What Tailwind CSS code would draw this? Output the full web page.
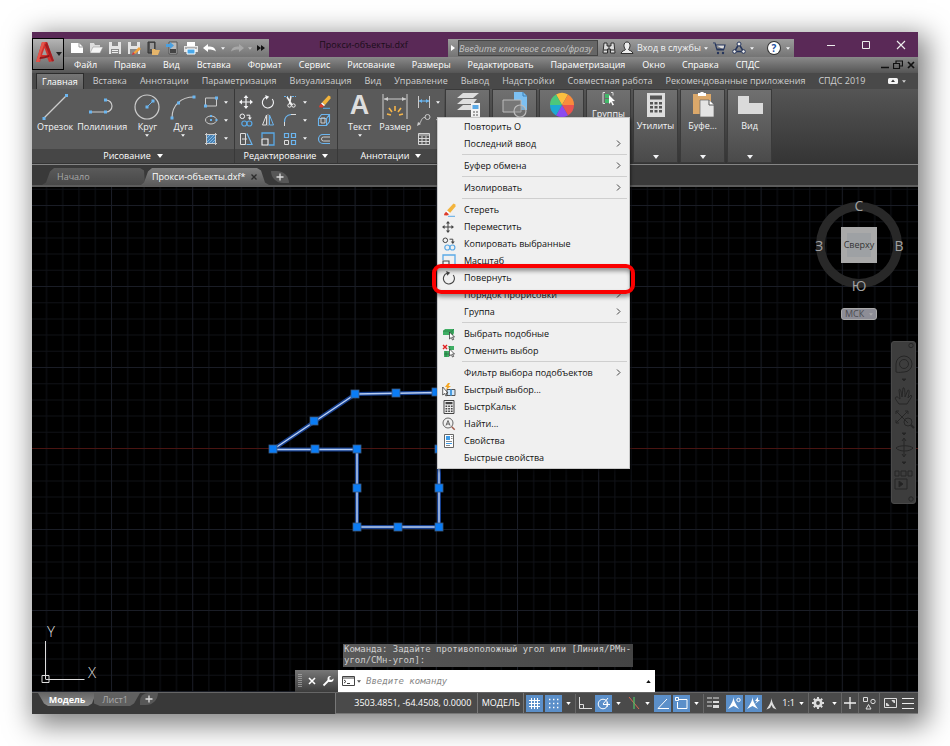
<!DOCTYPE html>
<html lang="ru">
<head>
    <meta charset="UTF-8">
    <meta name="viewport" content="width=device-width, initial-scale=1.0">
    <title>Прокси-объекты.dxf</title>
    <script src="https://cdn.jsdelivr.net/npm/@tailwindcss/browser@4"></script>
</head>
<body class="min-h-screen bg-white p-8 font-['Open_Sans','Noto_Sans',sans-serif] text-[9px] leading-3 text-gray-100">

    <!-- shared icons -->
    <svg class="hidden" xmlns="http://www.w3.org/2000/svg">
        <symbol id="i-move" viewBox="0 0 14 14">
            <path d="M7 1.5v11M1.5 7h11" fill="none" stroke="currentColor" stroke-width="1.2"/>
            <path d="M7 0l2.4 3H4.6zM7 14l2.4-3H4.6zM0 7l3-2.4v4.8zM14 7l-3-2.4v4.8z" fill="currentColor"/>
        </symbol>
        <symbol id="i-rotate" viewBox="0 0 14 14">
            <path d="M11.2 4A5.500 5.500 0 1 1 5 2.300" fill="none" stroke="currentColor" stroke-width="1.1"/>
            <path d="M4.200 0l4 1.800-3 2.900z" fill="currentColor"/>
        </symbol>
        <symbol id="i-copy" viewBox="0 0 14 14">
            <circle cx="3.3" cy="3.3" r="2.3" fill="none" stroke="currentColor"/>
            <path d="M7.5 2.2h3.3v3" fill="none" stroke="currentColor"/>
            <path d="M8.8 4.4h4l-2 2.6z" fill="currentColor"/>
            <circle cx="5.3" cy="10.5" r="2.5" fill="none" stroke="#5aa9e6" stroke-width="1.2"/>
            <circle cx="10.4" cy="10.5" r="2.5" fill="none" stroke="#5aa9e6" stroke-width="1.2"/>
        </symbol>
        <symbol id="i-scale" viewBox="0 0 14 14">
            <path d="M1 6V1h12v12H8" fill="none" stroke="#5aa9e6" stroke-width="1.3"/>
            <path d="M1 7h6v6H1z" fill="none" stroke="currentColor" stroke-width="1.1"/>
        </symbol>
        <symbol id="i-erase" viewBox="0 0 14 14">
            <path d="M11.5.5l2 1v2L8 10 5 7.500z" fill="#f3b43c"/>
            <path d="M5 7.500L8 10l-1 1.200-3-2.500z" fill="#fff"/>
            <path d="M4 8.700l3 2.500L5.200 12.500 2 12.200l.3-1.500z" fill="#dd3b2a"/>
            <path d="M6 13.300h7" stroke="#5aa9e6" stroke-width="1"/>
        </symbol>
        <symbol id="i-calc" viewBox="0 0 14 14">
            <path d="M2 .5h10v13H2z" fill="none" stroke="currentColor"/>
            <path d="M3.500 2h7v2.200h-7zM3.500 5.500h1.700v1.500H3.500zm2.700 0h1.700v1.500H6.200zm2.700 0h1.700v1.500H8.900zM3.500 8h1.700v1.500H3.500zm2.700 0h1.700v1.500H6.200zm2.700 0h1.700v1.500H8.900zM3.500 10.500h1.700V12H3.500zm2.700 0h1.700V12H6.200zm2.700 0h1.700V12H8.900z" fill="currentColor"/>
        </symbol>
        <symbol id="i-down" viewBox="0 0 6 4"><path d="M0 0h6L3 4z" fill="currentColor"/></symbol>
        <symbol id="i-right" viewBox="0 0 5 7"><path d="M1 .5l3 3-3 3" fill="none" stroke="currentColor"/></symbol>
    </svg>

    <div class="relative flex h-[calc(100vh-64px)] flex-col bg-[#3b3b3b] shadow-[5px_7px_26px_4px_rgba(0,0,0,0.5)]">

        <!-- application button -->
        <button aria-label="Меню приложения" class="absolute left-0 top-1.5 z-10 flex h-8 w-8 items-center border border-black bg-linear-to-b from-[#b4b4b4] to-[#6c6c6c] pl-0.5">
            <svg class="-mt-1 h-6 w-[21px] shrink-0" viewBox="0 0 21 24">
                <path d="M7 2h5l7 19-5 1-2-5-6 .5L5 22H1z" fill="#d2322d"/>
                <path d="M7 2h3L6 13l-1.500 9H1z" fill="#e4554b"/>
                <path d="M12 2l7 19-2 .5L10 5z" fill="#a31d20"/>
                <path d="M9.500 8L7 15h5z" fill="#a0a0a0"/>
                <path d="M5 17c4 0 7-1 9-2.500l.7 2C12 18 8 19 4.500 19z" fill="#8f181c"/>
            </svg>
            <svg class="h-1 w-1.5 text-[#222]"><use href="#i-down"/></svg>
        </button>

        <!-- title bar -->
        <header class="flex h-[25px] shrink-0 items-end bg-[#5a2957] pl-8">
            <div class="flex h-[18px] w-[205px] items-center gap-[5px] bg-linear-to-b from-[#9c9c9c] to-[#747474] pl-1.5">
                <button aria-label="Создать"><svg class="size-3.5" viewBox="0 0 14 14"><path d="M1 2h8l4 4v6H1z" fill="#fff"/><path d="M9 2v4h4" fill="none" stroke="#999"/></svg></button>
                <button aria-label="Открыть"><svg class="size-3.5" viewBox="0 0 14 14"><path d="M1 12V2h4l1 2h5v2" fill="#ddd"/><path d="M1 12l3-6h10l-3 6z" fill="#f5f5f5" stroke="#888" stroke-width=".5"/></svg></button>
                <button aria-label="Сохранить"><svg class="size-3.5" viewBox="0 0 14 14"><path d="M1 1h12v12H1z" fill="#e4e4e4"/><path d="M4 1h6v4H4zM3 8h8v5H3z" fill="#8a8a8a"/><path d="M4 9.500h6M4 11.500h6" stroke="#eee"/></svg></button>
                <button aria-label="Сохранить как"><svg class="size-3.5" viewBox="0 0 14 14"><path d="M1 1h12v12H1z" fill="#e4e4e4"/><path d="M4 1h6v4H4zM3 8h8v5H3z" fill="#8a8a8a"/><path d="M6 12l6-6 2 2-6 5z" fill="#f0a33c"/><path d="M6 11l2 2-3 1z" fill="#d33"/></svg></button>
                <button aria-label="Открыть с мобильного"><svg class="size-3.5" viewBox="0 0 14 14"><path d="M2 1h7v11H2z" fill="#555" stroke="#333"/><path d="M4 2h4v6H4z" fill="#999"/><path d="M6 8h3l1 1h4l-2 5H6z" fill="#e5b56b"/></svg></button>
                <button aria-label="Сохранить на мобильный"><svg class="size-3.5" viewBox="0 0 14 14"><path d="M4 1h8v12H4z" fill="#bbb" stroke="#555"/><path d="M5 8h6v4H5z" fill="#444"/><path d="M1 3h4V1l4 3.500L5 8V6H1z" fill="#4aa0e0"/></svg></button>
                <button aria-label="Печать"><svg class="size-3.5" viewBox="0 0 14 14"><path d="M3 1h8v4H3z" fill="#fff"/><path d="M0 5h14v6H0z" fill="#e6e6e6"/><path d="M1 7h12" stroke="#777"/><path d="M3 8h8v5H3z" fill="#4aa9ea" stroke="#fff"/></svg></button>
                <button aria-label="Отменить" class="flex items-center gap-1"><svg class="h-3 w-3.5" viewBox="0 0 14 12"><path d="M0 6l5-4v2.500c5 0 7 1 8 5C11 8 9 7.500 5 7.500V10z" fill="#fff"/></svg><svg class="h-[3px] w-1"><use href="#i-down"/></svg></button>
                <button aria-label="Повторить" class="flex items-center gap-1 text-[#bbb]"><svg class="h-3 w-3.5" viewBox="0 0 14 12"><path d="M14 6L9 2v2.500c-5 0-7 1-8 5C3 8 5 7.500 9 7.500V10z" fill="#a8a8a8"/></svg><svg class="h-[3px] w-1"><use href="#i-down"/></svg></button>
                <button aria-label="Ещё"><svg class="h-1.5 w-2" viewBox="0 0 8 6"><path d="M0 0l4 3-4 3zM4 0l4 3-4 3z" fill="#111"/></svg></button>
            </div>
            <h1 class="w-[179px] pb-1.5 pl-2.5 text-center text-[#1a0d19]">Прокси-объекты.dxf</h1>
            <div class="flex h-[18px] items-center bg-linear-to-b from-[#9c9c9c] to-[#747474]">
                <button aria-label="Свернуть поиск" class="flex w-2.5 justify-center"><svg class="h-1.5 w-1" viewBox="0 0 4 6"><path d="M0 0l4 3-4 3z" fill="#fff"/></svg></button>
                <input type="text" aria-label="Поиск" placeholder="Введите ключевое слово/фразу" class="h-4 w-[140px] border border-[#444] bg-[#666] p-0 italic placeholder:text-[#c4c4c4]">
                <button aria-label="Найти" class="ml-1"><svg class="size-3.5" viewBox="0 0 14 14"><path d="M2 2h3v3h4V2h3l1 10H8.500V8h-3v4H1z" fill="#ddd" stroke="#222" stroke-width=".9"/><path d="M2 9h3M9 9h3M7 5v3" stroke="#222"/></svg></button>
                <button class="ml-1 flex items-center gap-[3px]"><svg class="size-3.5" viewBox="0 0 14 14"><path d="M7 1c2 0 3 1.500 3 3.500S9 8 8.500 8.500c0 1 4 1 4.500 4H1c.5-3 4.500-3 4.500-4C5 8 4 6.500 4 4.500S5 1 7 1z" fill="#eee" stroke="#222" stroke-width=".9"/></svg>Вход в службы<svg class="h-[3px] w-1"><use href="#i-down"/></svg></button>
                <button aria-label="Магазин" class="ml-1"><svg class="size-3.5" viewBox="0 0 14 14"><path d="M1 2h2l2 7h7M3.500 4H13l-1 4H4.800" fill="#ddd" stroke="#25355c" stroke-width="1.200"/><circle cx="6" cy="12" r="1.200" fill="#25355c"/><circle cx="11" cy="12" r="1.200" fill="#25355c"/></svg></button>
                <button aria-label="Связь" class="ml-1.5 flex items-center gap-1"><svg class="size-3.5" viewBox="0 0 14 14"><path d="M7 3L2.500 10.500h9z" fill="none" stroke="#25355c" stroke-width="1.500"/><circle cx="7" cy="3" r="2" fill="#eee" stroke="#25355c"/><circle cx="2.500" cy="10.500" r="1.800" fill="#eee" stroke="#25355c"/><circle cx="11.500" cy="10.500" r="1.800" fill="#eee" stroke="#25355c"/></svg><svg class="h-[3px] w-1"><use href="#i-down"/></svg></button>
                <button aria-label="Справка" class="ml-3.5 mr-1 flex items-center gap-1.5"><span class="flex size-3 items-center justify-center rounded-full bg-white text-[10px] font-bold text-[#1d4fa0] ring-1 ring-[#333]">?</span><svg class="h-[3px] w-1"><use href="#i-down"/></svg></button>
            </div>
            <div class="ml-auto flex items-center gap-[25px] self-center pr-3">
                <button aria-label="Свернуть"><svg class="size-2.5" viewBox="0 0 10 10"><path d="M1 5.500h8" stroke="#eee"/></svg></button>
                <button aria-label="Развернуть"><svg class="size-2.5" viewBox="0 0 10 10"><path d="M1.500 1.500h7v7h-7z" fill="none" stroke="#eee"/></svg></button>
                <button aria-label="Закрыть"><svg class="size-2.5" viewBox="0 0 10 10"><path d="M1 1l8 8M9 1L1 9" stroke="#eee" stroke-width="1.100"/></svg></button>
            </div>
        </header>

        <!-- menu bar -->
        <nav class="flex h-4 shrink-0 items-center gap-[17px] whitespace-nowrap bg-linear-to-b from-[#8a8a8a] to-[#555] pl-[42px] text-white">
            <button>Файл</button><button>Правка</button><button>Вид</button><button>Вставка</button><button>Формат</button><button>Сервис</button><button>Рисование</button><button>Размеры</button><button>Редактировать</button><button>Параметризация</button><button>Окно</button><button>Справка</button><button>СПДС</button>
            <div class="ml-auto flex items-center gap-1 pr-[3px] text-[#111]">
                <button aria-label="Свернуть документ"><svg class="h-2.5 w-2" viewBox="0 0 8 10"><path d="M0 7.500h8" stroke="currentColor" stroke-width="1.500"/></svg></button>
                <button aria-label="Восстановить документ"><svg class="size-2.5" viewBox="0 0 10 10"><path d="M3 3V1h6.500v5H7M.5 3.500h6v5h-6z" fill="none" stroke="currentColor" stroke-width="1.200"/></svg></button>
                <button aria-label="Закрыть документ"><svg class="size-2" viewBox="0 0 8 8"><path d="M1 1l6 6M7 1L1 7" stroke="currentColor" stroke-width="1.700"/></svg></button>
            </div>
        </nav>

        <!-- ribbon tabs -->
        <nav class="flex h-4 shrink-0 items-center gap-[13px] whitespace-nowrap bg-[#494949] pl-1 text-[#cfcfcf]">
            <button class="-mr-1 h-full border border-b-0 border-[#2c2c2c] bg-linear-to-b from-[#757575] to-[#606060] px-[5px] text-white">Главная</button><button>Вставка</button><button>Аннотации</button><button>Параметризация</button><button>Визуализация</button><button>Вид</button><button>Управление</button><button>Вывод</button><button>Надстройки</button><button>Совместная работа</button><button>Рекомендованные приложения</button><button>СПДС 2019</button>
            <button aria-label="Свернуть ленту" class="ml-auto mr-3 flex items-center gap-1"><svg class="h-1.5 w-2.5" viewBox="0 0 10 6"><rect width="10" height="6" rx="1.500" fill="#f4f4f4"/><path d="M3 4h4L5 1.500z" fill="#333"/></svg><svg class="h-[3px] w-1"><use href="#i-down"/></svg></button>
        </nav>

        <!-- ribbon -->
        <div class="flex h-[76px] shrink-0 border-b border-[#858585] bg-linear-to-b from-[#555] to-[#343434] pb-px">
            <section class="flex w-[203px] flex-col border-r border-[#383838] bg-[#5a5a5a]">
                <div class="flex flex-1 gap-1 pl-[5px] pt-1">
                    <button class="flex flex-col items-center self-start"><svg class="size-7" viewBox="0 0 28 28"><path d="M3 25L25 3" stroke="#ccc" stroke-width="1.200"/><path d="M1.500 24h3v3h-3zM24 1h3v3h-3z" fill="#6bb5ef"/></svg>Отрезок</button>
                    <button class="flex flex-col items-center self-start"><svg class="size-7" viewBox="0 0 28 28"><path d="M2 19h16a6 6 0 0 0 0-12" fill="none" stroke="#ccc" stroke-width="1.200"/><path d="M1 17.500h3v3H1zM16 17.500h3v3h-3zM16 5.500h3v3h-3z" fill="#6bb5ef"/></svg>Полилиния</button>
                    <button class="ml-0.5 flex flex-col items-center self-start"><svg class="size-7" viewBox="0 0 28 28"><circle cx="14" cy="14" r="12" fill="none" stroke="#ccc" stroke-width="1.200"/><path d="M14 14l6-6" stroke="#6bb5ef"/><path d="M12.500 12.500h3v3h-3zM18.500 6.500h3v3h-3z" fill="#6bb5ef"/></svg>Круг<svg class="mt-px h-[3px] w-1"><use href="#i-down"/></svg></button>
                    <button class="ml-1 flex flex-col items-center self-start"><svg class="size-7" viewBox="0 0 28 28"><path d="M3 25C3 12 12 4 25 4" fill="none" stroke="#ccc" stroke-width="1.200"/><path d="M1.500 23.500h3v3h-3zM8 8.500h3v3H8zM23.500 2.500h3v3h-3z" fill="#6bb5ef"/></svg>Дуга<svg class="mt-px h-[3px] w-1"><use href="#i-down"/></svg></button>
                    <div class="ml-[3px] grid h-[55px] grid-cols-[14px_4px] items-center gap-x-1.5">
                        <svg class="size-3.5" viewBox="0 0 14 14"><path d="M1.500 3h11v8h-11z" fill="none" stroke="#ccc"/><path d="M0 9.500h3v3H0zM11 1.500h3v3h-3z" fill="#6bb5ef"/></svg><svg class="h-[3px] w-1"><use href="#i-down"/></svg>
                        <svg class="size-3.5" viewBox="0 0 14 14"><ellipse cx="7" cy="7" rx="5.500" ry="4" fill="none" stroke="#ccc"/><path d="M6 6h2v2H6zM11.500 6h2v2h-2zM6 2h2v2H6z" fill="#6bb5ef"/></svg><svg class="h-[3px] w-1"><use href="#i-down"/></svg>
                        <svg class="size-3.5" viewBox="0 0 14 14"><path d="M3 3h8v8H3z" fill="#4a80b0"/><path d="M2.500 1v12M11.500 1v12M1 2.500h12M1 11.500h12" stroke="#ccc"/><path d="M3 6l3-3M3 10l7-7M5 11l6-6M8 11l3-3" stroke="#8cc8f5" stroke-width=".8"/></svg><svg class="h-[3px] w-1"><use href="#i-down"/></svg>
                    </div>
                </div>
                <button class="flex h-3.5 items-center justify-center gap-1.5 bg-[#464646] text-white">Рисование<svg class="h-1 w-1.5"><use href="#i-down"/></svg></button>
            </section>

            <section class="flex w-[103px] flex-col border-r border-[#383838] bg-[#5a5a5a]">
                <div class="flex flex-1 pl-1 pt-1">
                    <div class="grid h-[55px] grid-cols-[14px_14px_14px_4px_14px] items-center gap-x-2">
                        <svg class="size-3.5"><use href="#i-move"/></svg>
                        <svg class="size-3.5"><use href="#i-rotate"/></svg>
                        <svg class="size-3.5" viewBox="0 0 14 14"><path d="M1 1.500h4M9 1.500h4" stroke="#6bb5ef" stroke-dasharray="2 1"/><path d="M4 2l5 8M8 1L6.500 9" stroke="#f2f2f2" stroke-width="1.500"/><circle cx="6.500" cy="10.500" r="1.700" fill="none" stroke="#f2f2f2"/><circle cx="10.500" cy="10.500" r="1.700" fill="none" stroke="#f2f2f2"/></svg>
                        <svg class="-ml-0.5 h-[3px] w-1"><use href="#i-down"/></svg>
                        <svg class="size-3.5"><use href="#i-erase"/></svg>

                        <svg class="size-3.5"><use href="#i-copy"/></svg>
                        <svg class="size-3.5" viewBox="0 0 14 14"><path d="M5.500 2v10h-4z" fill="none" stroke="#ddd"/><path d="M8.500 2v10h4z" fill="none" stroke="#6bb5ef"/><path d="M7 1v12" stroke="#ccc" stroke-width=".6"/></svg>
                        <svg class="size-3.5" viewBox="0 0 14 14"><path d="M1.500 13V9M8 1.500h5" stroke="#ddd"/><path d="M1.500 9c0-4 2-7 6.500-7.500" fill="none" stroke="#6bb5ef" stroke-width="1.200"/></svg>
                        <svg class="-ml-0.5 h-[3px] w-1"><use href="#i-down"/></svg>
                        <svg class="size-3.5" viewBox="0 0 14 14"><path d="M1.500 5.500h8v7h-8zM1.500 5.500l3-4h8v7l-3 4M9.500 5.500l3-4" fill="none" stroke="#6bb5ef" stroke-width="1.100"/><path d="M4 5h4v5H4z" fill="none" stroke="#ccc"/></svg>

                        <svg class="size-3.5" viewBox="0 0 14 14"><path d="M1.500 1.500h5v11h-5zM3 7h5" fill="none" stroke="#ddd"/><path d="M8 1.500l5 11H7.500" fill="none" stroke="#6bb5ef" stroke-width="1.200"/></svg>
                        <svg class="size-3.5"><use href="#i-scale"/></svg>
                        <svg class="size-3.5" viewBox="0 0 14 14"><path d="M8.500 1.500h4v4h-4zM8.500 8.500h4v4h-4zM1.500 1.500h4v4h-4z" fill="none" stroke="#6bb5ef" stroke-width="1.200"/><path d="M1.500 8.500h4v4h-4z" fill="none" stroke="#ddd"/></svg>
                        <svg class="-ml-0.5 h-[3px] w-1"><use href="#i-down"/></svg>
                        <svg class="size-3.5" viewBox="0 0 14 14"><path d="M13 2.500H6a4.500 4.500 0 0 0 0 9h7" fill="none" stroke="#6bb5ef" stroke-width="1.200"/><path d="M13 5H6.500a2 2 0 0 0 0 4H13" fill="none" stroke="#ccc"/></svg>
                    </div>
                </div>
                <button class="flex h-3.5 items-center justify-center gap-1.5 bg-[#464646] text-white">Редактирование<svg class="h-1 w-1.5"><use href="#i-down"/></svg></button>
            </section>

            <section class="mr-px flex w-[106px] flex-col bg-[#5a5a5a]">
                <div class="flex flex-1 gap-2 pl-2.5 pt-1">
                    <button class="flex flex-col items-center self-start"><span class="h-7 font-['Liberation_Sans',sans-serif] text-[27px] font-bold leading-6 text-[#dedede]">A</span>Текст<svg class="mt-px h-[3px] w-1"><use href="#i-down"/></svg></button>
                    <button class="flex flex-col items-center self-start"><svg class="size-7" viewBox="0 0 28 28"><path d="M2 1v25M26 1v25M3 6h22" stroke="#ccc"/><path d="M3 6l4-2v4zM25 6l-4-2v4z" fill="#ccc"/><path d="M14 13v5M8 15l3 4M20 15l-3 4M6 21l4 1M22 21l-4 1" stroke="#f5b54a" stroke-width="1.600"/></svg>Размер</button>
                    <div class="-ml-0.5 grid h-[55px] grid-cols-[14px_4px] items-center gap-x-[5px]">
                        <svg class="size-3.5" viewBox="0 0 14 14"><path d="M1.500 1v12M12.500 1v12" stroke="#ccc"/><path d="M2 6h10" stroke="#6bb5ef" stroke-width="1.200"/><path d="M2 6l3-2v4zM12 6L9 4v4z" fill="#6bb5ef"/></svg><svg class="h-[3px] w-1"><use href="#i-down"/></svg>
                        <svg class="size-3.5" viewBox="0 0 14 14"><circle cx="10.500" cy="4" r="2.500" fill="none" stroke="#ccc"/><path d="M8 4.500C4 4.500 5 8 2 11" fill="none" stroke="#ccc"/><path d="M0 13l1-4 3 2z" fill="#ccc"/></svg><svg class="h-[3px] w-1"><use href="#i-down"/></svg>
                        <svg class="size-3.5" viewBox="0 0 14 14"><path d="M1.500 1.500h11v11h-11zM1.500 3h11M1.500 6.500h11M1.500 9.500h11M5 4v8.500M9 4v8.500" fill="none" stroke="#d6d6d6"/></svg>
                    </div>
                </div>
                <button class="flex h-3.5 items-center justify-center gap-1.5 bg-[#464646] text-white">Аннотации<svg class="h-1 w-1.5"><use href="#i-down"/></svg></button>
            </section>

            <!-- collapsed panels -->
            <div class="flex gap-0.5">
                <button aria-label="Слои" class="flex w-[45px] flex-col items-center border border-[#3a3a3a] bg-linear-to-b from-[#707070] to-[#4a4a4a] pt-px">
                    <svg class="size-7" viewBox="0 0 28 28"><path d="M9 2h16l-6 5H3zM9 8h14l-4 5H3zM9 14h10v5H3z" fill="#dedede"/><path d="M17 12h9v14h-9z" fill="#f2f2f2"/><path d="M18.500 14h6v4h-6z" fill="#5aa9e6"/><path d="M19 21h5M19 24h5" stroke="#555" stroke-dasharray="2 1"/></svg>
                </button>
                <button aria-label="Блок" class="flex w-[45px] flex-col items-center border border-[#3a3a3a] bg-linear-to-b from-[#707070] to-[#4a4a4a] pt-px">
                    <svg class="size-7" viewBox="0 0 28 28"><path d="M13 1h9l4 4v14H13z" fill="#7cc0f2"/><path d="M22 1v4h4" fill="none" stroke="#3a80b8"/><path d="M2 9h18v12H2z" fill="#777" stroke="#bbb"/><circle cx="19" cy="20" r="6" fill="#8885" stroke="#bbb" stroke-width="1.200"/></svg>
                </button>
                <button aria-label="Свойства" class="flex w-[45px] flex-col items-center border border-[#3a3a3a] bg-linear-to-b from-[#707070] to-[#4a4a4a] pt-px">
                    <svg class="size-7" viewBox="0 0 28 28"><path d="M14 14L8 3.600a12 12 0 0 1 12 0z" fill="#fbbf3f"/><path d="M14 14l6-10.400A12 12 0 0 1 26 14z" fill="#f98b3c"/><path d="M14 14h12a12 12 0 0 1-6 10.400z" fill="#ea5350"/><path d="M14 14l6 10.400a12 12 0 0 1-12 0z" fill="#8b4bf0"/><path d="M14 14L8 24.400A12 12 0 0 1 2 14z" fill="#1da9d3"/><path d="M14 14H2A12 12 0 0 1 8 3.600z" fill="#4cc77c"/></svg>
                </button>
                <button class="flex w-[45px] flex-col items-center border border-[#3a3a3a] bg-linear-to-b from-[#707070] to-[#4a4a4a] pt-px">
                    <svg class="size-4" viewBox="0 0 16 16"><path d="M4 1.500H2v11h2M10 1.500h2v3" fill="none" stroke="#ddd"/><path d="M4 3h4v4H4zM4 8h4v4H4z" fill="#43b86a"/><path d="M8 4l6 6-3 .3 2 3.500-1.500.7-1.500-3.500L8 13z" fill="#fff"/></svg><span class="pt-px">Группы</span>
                </button>
                <button class="flex w-[45px] flex-col items-center border border-[#3a3a3a] bg-linear-to-b from-[#707070] to-[#4a4a4a] pb-[3px] pt-px">
                    <svg class="size-7" viewBox="0 0 28 28"><path d="M5 2h18v24H5z" fill="#dedede"/><path d="M8 4.500h12v4H8zM8 11h3v2.500H8zm4.500 0h3v2.500h-3zm4.500 0h3v2.500h-3zM8 15h3v2.500H8zm4.500 0h3v2.500h-3zm4.500 0h3v2.500h-3zM8 19h3v2.500H8zm4.500 0h3v2.500h-3zm4.500 0h3v2.500h-3z" fill="#555"/></svg><span class="pt-px">Утилиты</span><svg class="mt-auto h-1 w-1.5"><use href="#i-down"/></svg>
                </button>
                <button class="flex w-[45px] flex-col items-center border border-[#3a3a3a] bg-linear-to-b from-[#707070] to-[#4a4a4a] pb-[3px] pt-px">
                    <svg class="size-7" viewBox="0 0 28 28"><path d="M4 3h18v20H4z" fill="#dba86a"/><path d="M9 2h2c0-1.500 4-1.500 4 0h2v3H9z" fill="#fff"/><path d="M11 9h9l5 5v12H11z" fill="#e4e4e4" stroke="#666" stroke-width=".7"/><path d="M20 9v5h5" fill="#fff" stroke="#555"/></svg><span class="pt-px">Буфе...</span><svg class="mt-auto h-1 w-1.5"><use href="#i-down"/></svg>
                </button>
                <button class="flex w-[45px] flex-col items-center border border-[#3a3a3a] bg-linear-to-b from-[#707070] to-[#4a4a4a] pb-[3px] pt-px">
                    <svg class="size-7" viewBox="0 0 28 28"><path d="M2 5h11v7h14v11H2z" fill="#dadada"/></svg><span class="pt-px">Вид</span><svg class="mt-auto h-1 w-1.5"><use href="#i-down"/></svg>
                </button>
            </div>
        </div>

        <!-- document tabs -->
        <div class="flex h-[22px] shrink-0 items-end border-b-2 border-[#5c5c5c] bg-[#393939] pl-2.5">
            <button class="flex h-[17px] w-[103px] items-center bg-linear-to-b from-[#5a5a5a] to-[#484848] pl-[15px] text-[#a8a8a8] [clip-path:polygon(0_100%,4px_85%,8px_20%,12px_0,98px_0,102px_15%,100%_100%)]">Начало</button>
            <button class="-ml-1 flex h-[17px] w-[128px] items-center justify-between bg-linear-to-b from-[#808080] to-[#5c5c5c] pl-[11px] pr-3 text-white [clip-path:polygon(0_100%,3px_85%,7px_20%,11px_0,116px_0,120px_15%,124px_85%,100%_100%)]">Прокси-объекты.dxf*<svg class="size-1.5" viewBox="0 0 6 6"><path d="M.5.5l5 5M5.500.5l-5 5" stroke="#2c2c2c" stroke-width="1.300"/></svg></button>
            <button aria-label="Новый чертёж" class="mb-0.5 ml-0.5 flex h-3 w-[18px] items-center justify-center rounded-bl-xl rounded-tr-xl bg-[#575757]"><svg class="size-2" viewBox="0 0 8 8"><path d="M4 .5v7M.5 4h7" stroke="#ddd" stroke-width="1.300"/></svg></button>
        </div>

        <!-- drawing area -->
        <main class="relative flex-1 overflow-hidden bg-black">
            <svg class="absolute inset-0 size-full" xmlns="http://www.w3.org/2000/svg">
                <defs>
                    <pattern id="grid" x="79" y="18" width="81.200" height="81" patternUnits="userSpaceOnUse">
                        <path d="M16.700 0v81M33 0v81M49.200 0v81M65.500 0v81M0 16.700h82M0 33h82M0 49h82M0 65.200h82" stroke="#0f1116"/>
                        <path d="M.5 0v81M0 .5h82" stroke="#1a1d26"/>
                    </pattern>
                </defs>
                <rect width="100%" height="100%" fill="url(#grid)"/>
                <path d="M0 261.500h2000" stroke="#4a1512"/>
                <g fill="none" stroke-linejoin="round">
                    <path d="M241 262.500L323.500 207 407 205.500V340H325V262.500z" stroke="#163f8e" stroke-width="4"/>
                    <path d="M241 262.500L323.500 207 407 205.500V340H325V262.500z" stroke="#b9cff2" stroke-width="1.500"/>
                </g>
                <g id="grips" fill="#0a7cf5" stroke="#3c5a80" stroke-width=".8"></g>
            </svg>

            <svg class="absolute bottom-2 left-2 h-16 w-[70px]" viewBox="0 -6 70 64">
                <path d="M5.500 15v38M5.500 53.500h39M2 49.500h7v7H2z" fill="none" stroke="#ddd"/>
                <text x="7" y="11" font-size="15" font-weight="300" fill="#ddd">Y</text>
                <text x="48" y="52" font-size="15" font-weight="300" fill="#ddd">X</text>
            </svg>

            <!-- view cube -->
            <div class="absolute right-3 top-2 w-[94px]">
                <svg class="h-[102px] w-[94px]" viewBox="0 0 94 102">
                    <circle cx="47" cy="50" r="38.500" fill="none" stroke="#282828" stroke-width="9"/>
                    <path d="M29 32h36v36H29z" fill="#a9a9a9"/>
                    <path d="M35 38h24v24H35z" fill="#9ea1a4"/>
                    <g fill="#a2a2a2" font-size="14" text-anchor="middle">
                        <text x="47" y="16">С</text><text x="47" y="96">Ю</text><text x="7" y="56">З</text><text x="87" y="56">В</text>
                    </g>
                    <text x="47" y="53" font-size="9" text-anchor="middle" fill="#333">Сверху</text>
                </svg>
                <button class="mx-auto mt-[11px] flex h-3 w-9 items-center justify-between rounded-[3px] border border-[#aaa] bg-[#8d8d96] px-[3px] text-[#4c4c50]">МСК<svg class="h-[3px] w-1 text-[#aaa]"><use href="#i-down"/></svg></button>
            </div>

            <!-- navigation bar -->
            <div class="absolute right-0.5 top-[154px] rounded-[3px] border border-[#4a4a4a] bg-[#3d3d3d]">
                <svg class="h-[161px] w-[23px]" viewBox="0 0 23 161" fill="none" stroke="#262626">
                    <circle cx="19" cy="3.500" r="2.200"/><circle cx="19" cy="157" r="2.200"/>
                    <path d="M4 22a8 8 0 1 1 8 8c-3 0-4 1-8 0z"/><circle cx="12" cy="22" r="4.500"/>
                    <path d="M7 62c-2-3-5-6-3-7s3 2 4 2l-1-9c1-2 2 0 3 7l1-9c1-1 2 0 2 9l3-7c2 0 1 3 0 8l3-3c2 1-1 4-4 9z"/>
                    <path d="M4 69l12 12M16 69L4 81M4 72v-3h3M13 69h3v3M4 78v3h3"/><circle cx="16" cy="80" r="4"/><path d="M19 83l3 3" stroke-width="2"/>
                    <path d="M12 97v17M4 106c3 4 14 4 17 0M4 106c3-3 14-3 17 0M10 99l2-3 2 3M10 112l2 3 2-3"/>
                    <path d="M3 129h4v5H3zM9 129h5v5H9zM16 129h4v5h-4zM3 137h12v10H3z"/>
                    <path d="M7 139v6l4-3zM10 37h4l-2 2zM10 91h4l-2 2zM10 120h4l-2 2z" fill="#222"/>
                </svg>
            </div>

            <!-- command line -->
            <div class="absolute bottom-0 left-1/2 w-[360px] -translate-x-1/2 font-['DejaVu_Sans_Mono',monospace]">
                <p class="mb-[3px] ml-12 mr-[22px] whitespace-nowrap bg-linear-to-r from-[#5a5a5a] to-[#444] px-px pb-px text-[9px] leading-[11px] text-[#d0d0d0]">Команда: Задайте противоположный угол или [Линия/РМн-<br>угол/СМн-угол]:</p>
                <div class="flex h-[22px]">
                    <div class="flex w-[43px] items-center gap-1.5 bg-linear-to-b from-[#777] to-[#3c3c3c] pl-[3px]">
                        <svg class="h-3.5 w-1" viewBox="0 0 4 14"><path d="M1 0v14M3 0v14" stroke="#ccc" stroke-dasharray="1 1"/></svg>
                        <button aria-label="Закрыть"><svg class="size-2" viewBox="0 0 8 8"><path d="M1 1l6 6M7 1L1 7" stroke="#fff" stroke-width="1.600"/></svg></button>
                        <button aria-label="Настройка"><svg class="size-3" viewBox="0 0 12 12"><path d="M1.500 10.500L7 5" stroke="#fff" stroke-width="1.800"/><path d="M9 1a3 3 0 1 0 2.500 2.500L9.500 5 7.500 4.500 7.500 2.500z" fill="#fff"/></svg></button>
                    </div>
                    <label for="command" class="flex items-center gap-0.5 bg-white pl-1 text-[#555]" aria-label="Команда"><svg class="h-2.5 w-[13px]" viewBox="0 0 13 10"><path d="M.5.5h12v9H.5zM.5 2h12" fill="none" stroke="#444"/><path d="M2 4l2 1.500L2 7M5 7.500h3" fill="none" stroke="#444"/></svg><svg class="h-[3px] w-1"><use href="#i-down"/></svg></label>
                    <input id="command" type="text" placeholder="Введите команду" class="min-w-0 flex-1 bg-white pl-[5px] text-[9px] italic text-gray-800 outline-none placeholder:text-[#888]">
                    <button aria-label="История" class="bg-white pr-1"><svg class="h-[3px] w-[5px]" viewBox="0 0 6 4"><path d="M0 4h6L3 0z" fill="#111"/></svg></button>
                </div>
            </div>
        </main>

        <!-- status bar -->
        <footer class="flex h-[22px] shrink-0 justify-between border-t border-[#666] bg-[#393939]">
            <div class="flex items-start pl-1.5">
                <button class="h-[13px] w-[58px] bg-linear-to-b from-[#666] to-[#8c8c8c] font-bold text-white [clip-path:polygon(0_0,100%_0,54px_80%,50px_100%,10px_100%,6px_80%)]">Модель</button>
                <button class="-ml-1.5 h-[13px] w-[50px] bg-[#606060] text-[#aaa] [clip-path:polygon(4px_0,100%_0,44px_80%,40px_100%,10px_100%,4px_80%)]">Лист1</button>
                <button aria-label="Новый лист" class="flex h-3 w-[18px] items-center justify-center rounded-br-xl rounded-tl-lg bg-[#575757]"><svg class="size-2" viewBox="0 0 8 8"><path d="M4 .5v7M.5 4h7" stroke="#ddd" stroke-width="1.300"/></svg></button>
            </div>
            <div class="flex items-center whitespace-nowrap border-b border-[#777] bg-[#4a4a4a] text-white">
                <button class="h-full w-[142px] border-l border-[#777] pr-1.5 text-right">3503.4851, -64.4508, 0.0000</button>
                <button class="h-full w-[47px] border-x border-[#777] text-center">МОДЕЛЬ</button>
                <button aria-label="Сетка" class="ml-0.5 bg-[#5b8fc9] p-0.5"><svg class="size-[13px]" viewBox="0 0 13 13"><path d="M3.500 1v11M6.500 1v11M9.500 1v11M1 3.500h11M1 6.500h11M1 9.500h11" stroke="#fff"/></svg></button>
                <button aria-label="Шаг" class="ml-0.5 bg-[#5b8fc9] p-0.5"><svg class="size-[13px]" viewBox="0 0 13 13"><path d="M2 2.500h10M2 6.500h10M2 10.500h10" stroke="#fff" stroke-width="1.400" stroke-dasharray="1.400 2.600"/></svg></button>
                <button aria-label="Параметры шага" class="border-r border-[#666] px-1 py-2"><svg class="h-[3px] w-[5px]"><use href="#i-down"/></svg></button>
                <button aria-label="Орто" class="ml-0.5"><svg class="size-3.5" viewBox="0 0 14 14"><path d="M1.500 1v11.500H14M1.500 8.500h4v4" fill="none" stroke="#ddd"/></svg></button>
                <button aria-label="Полярное отслеживание" class="ml-[3px] bg-[#5b8fc9] p-0.5"><svg class="size-[13px]" viewBox="0 0 13 13"><circle cx="6" cy="7" r="4.800" fill="none" stroke="#fff"/><path d="M6 7.500h7M6 7l5-6M10 5v5" stroke="#fff"/></svg></button>
                <button aria-label="Углы" class="px-1"><svg class="h-[3px] w-[5px]"><use href="#i-down"/></svg></button>
                <button aria-label="Изометрия" class="ml-0.5"><svg class="size-3.5" viewBox="0 0 14 14"><path d="M2 1l10 12" stroke="#d86a50"/><path d="M7 1v12" stroke="#4fc46a" stroke-width="1.200"/></svg></button>
                <button aria-label="Изоплоскости" class="px-1"><svg class="h-[3px] w-[5px]"><use href="#i-down"/></svg></button>
                <button aria-label="Объектное отслеживание" class="bg-[#5b8fc9] p-0.5"><svg class="size-[13px]" viewBox="0 0 13 13"><path d="M11 2L2 11.500h11" fill="none" stroke="#fff"/></svg></button>
                <button aria-label="Привязка" class="ml-0.5 bg-[#5b8fc9] p-0.5"><svg class="size-[13px]" viewBox="0 0 13 13"><path d="M4 2.500h8v9H2.500V5" fill="none" stroke="#fff"/><path d="M.5.5h3v3h-3z" fill="none" stroke="#fff"/></svg></button>
                <button aria-label="Параметры привязки" class="border-r border-[#666] px-1 py-2"><svg class="h-[3px] w-[5px]"><use href="#i-down"/></svg></button>
                <button aria-label="Веса линий" class="mx-0.5"><svg class="size-3.5" viewBox="0 0 14 14"><path d="M1 2h5M1 6h5M1 10h5M7 2h6" stroke="#ddd"/><path d="M7 6h6" stroke="#ddd" stroke-width="2"/><path d="M7 10.500h6" stroke="#ddd" stroke-width="3"/></svg></button>
                <button aria-label="Видимость аннотаций" class="ml-1 bg-[#5b8fc9] p-0.5"><svg class="size-[13px]" viewBox="0 0 13 13"><path d="M5.500 0C6 4 7 6 11 12L5.500 9 0 12C4 6 5 4 5.500 0z" fill="#fff"/><circle cx="10.500" cy="3" r="1.700" fill="none" stroke="#fff"/></svg></button>
                <button aria-label="Автомасштаб" class="ml-0.5 bg-[#5b8fc9] p-0.5"><svg class="size-[13px]" viewBox="0 0 13 13"><path d="M5.500 0C6 4 7 6 11 12L5.500 9 0 12C4 6 5 4 5.500 0z" fill="#fff"/><path d="M11 0L8 4h2L8 7l5-4h-2z" fill="#fff"/></svg></button>
                <button class="ml-[3px] flex items-center gap-1"><svg class="size-[13px]" viewBox="0 0 13 13"><path d="M6.500 1C7 5 8 7 11.500 12.500L8 11 6.500 8 5 11l-3.500 1.500C5 7 6 5 6.500 1z" fill="#ddd"/></svg>1:1<svg class="h-[3px] w-[5px]"><use href="#i-down"/></svg></button>
                <button aria-label="Рабочее пространство" class="ml-1 flex items-center gap-[7px] border-l border-[#666] py-[3px] pl-0.5"><svg class="size-3.5" viewBox="0 0 14 14"><circle cx="7" cy="7" r="3.200" fill="none" stroke="#ddd" stroke-width="2.600"/><path d="M7 1v2M7 11v2M1 7h2M11 7h2M2.800 2.800l1.400 1.400M9.800 9.800l1.400 1.400M2.800 11.200l1.400-1.400M9.800 4.200l1.400-1.400" stroke="#ddd" stroke-width="2"/></svg><svg class="h-[3px] w-[5px]"><use href="#i-down"/></svg></button>
                <button aria-label="Монитор аннотаций" class="ml-1 border-x border-[#666] px-px py-[3px]"><svg class="size-3.5" viewBox="0 0 14 14"><path d="M7 1v12M1 7h12" stroke="#eee" stroke-width="1.300"/></svg></button>
                <button aria-label="Изоляция объектов" class="border-r border-[#666] px-[3px] py-[3px]"><svg class="size-3.5" viewBox="0 0 14 14"><path d="M1.500 1.500h4v4h-4zM6.500 8.500l2.500 4.500H4z" fill="none" stroke="#ddd"/><circle cx="11" cy="5.500" r="2.200" fill="none" stroke="#ddd"/></svg></button>
                <button aria-label="Полный экран" class="ml-1"><svg class="size-3.5" viewBox="0 0 14 14"><path d="M.5 2.500h12v9H.5z" fill="none" stroke="#ddd"/><path d="M10.500 7V4.500H8zM2.500 7v2.500H5z" fill="#ddd" stroke="#ddd"/></svg></button>
                <button aria-label="Адаптация" class="mx-1"><svg class="h-3.5 w-3" viewBox="0 0 12 14"><path d="M0 2.500h12M0 7.500h12M0 12.500h12" stroke="#eee" stroke-width="1.200"/></svg></button>
            </div>
        </footer>

        <!-- context menu -->
        <div role="menu" class="absolute left-[405px] top-[85px] z-20 w-[193px] border border-[#c8c8c8] bg-[#f0f0f0] pb-0.5 text-[#111] shadow-[1px_2px_3px_rgba(0,0,0,0.5)] [&_svg]:text-[#444] [&>button]:grid [&>button]:h-[17px] [&>button]:w-full [&>button]:grid-cols-[14px_1fr_5px] [&>button]:items-center [&>button]:gap-x-2 [&>button]:pl-1 [&>button]:pr-2 [&>button]:text-left [&>hr]:my-0.5 [&>hr]:ml-6 [&>hr]:mr-0.5 [&>hr]:border-[#cfcfcf]">
            <button role="menuitem"><i></i>Повторить О</button>
            <button role="menuitem"><i></i>Последний ввод<svg class="h-[7px] w-[5px]"><use href="#i-right"/></svg></button>
            <hr>
            <button role="menuitem"><i></i>Буфер обмена<svg class="h-[7px] w-[5px]"><use href="#i-right"/></svg></button>
            <hr>
            <button role="menuitem"><i></i>Изолировать<svg class="h-[7px] w-[5px]"><use href="#i-right"/></svg></button>
            <hr>
            <button role="menuitem"><svg class="size-3.5"><use href="#i-erase"/></svg>Стереть</button>
            <button role="menuitem"><svg class="size-3"><use href="#i-move"/></svg>Переместить</button>
            <button role="menuitem"><svg class="size-3.5"><use href="#i-copy"/></svg>Копировать выбранные</button>
            <button role="menuitem"><svg class="size-3.5"><use href="#i-scale"/></svg>Масштаб</button>
            <button role="menuitem"><svg class="size-3.5"><use href="#i-rotate"/></svg>Повернуть</button>
            <button role="menuitem"><i></i>Порядок прорисовки<svg class="h-[7px] w-[5px]"><use href="#i-right"/></svg></button>
            <button role="menuitem"><i></i>Группа<svg class="h-[7px] w-[5px]"><use href="#i-right"/></svg></button>
            <hr>
            <button role="menuitem"><svg class="size-3.5" viewBox="0 0 14 14"><path d="M1 4l2-2h9v4l-1 2H1z" fill="#3fae64"/><path d="M1 4h9v4M10 4l2-2" fill="none" stroke="#227a41" stroke-width=".7"/><path d="M7.500 5v7l1.800-1.500 1.200 2.500 1.200-.6-1.200-2.400h2z" fill="#fff" stroke="#222" stroke-width=".7"/></svg>Выбрать подобные</button>
            <button role="menuitem"><svg class="size-3.5" viewBox="0 0 14 14"><path d="M6 2h6v4H8zM2 7h5v6H2z" fill="#3fae64"/><path d="M8 2l-1 3M2 10h5M4 7v6" stroke="#1f6e3a" stroke-width=".7"/><path d="M1 1l4 4M5 1L1 5" stroke="#e02020" stroke-width="1.400"/><path d="M7.500 5v7l1.800-1.500 1.200 2.500 1.200-.6-1.200-2.400h2z" fill="#fff" stroke="#222" stroke-width=".7"/></svg>Отменить выбор</button>
            <hr>
            <button role="menuitem"><i></i>Фильтр выбора подобъектов<svg class="h-[7px] w-[5px]"><use href="#i-right"/></svg></button>
            <button role="menuitem"><svg class="size-3.5" viewBox="0 0 14 14"><path d="M5 6.500h8v6H5z" fill="#cfe6fa" stroke="#555"/><path d="M9 6.500v6" stroke="#4a9de0" stroke-width="2"/><path d="M6 0L3 4h2L4 7l5-4H6.500L8 0z" fill="#f5a623"/><path d="M.7 4v8l2-1.500 1.200 2.500 1.200-.6L4 10h2z" fill="#fff" stroke="#222" stroke-width=".7"/></svg>Быстрый выбор...</button>
            <button role="menuitem"><svg class="size-3.5"><use href="#i-calc"/></svg>БыстрКальк</button>
            <button role="menuitem"><svg class="size-3.5" viewBox="0 0 14 14"><circle cx="6" cy="6" r="5" fill="none" stroke="#666"/><path d="M4 8.500l2-5 2 5M4.700 7h2.600" fill="none" stroke="#555" stroke-width=".9"/><path d="M9.700 9.700l3 3" stroke="#a05a4a" stroke-width="1.500"/></svg>Найти...</button>
            <button role="menuitem"><svg class="size-3.5" viewBox="0 0 14 14"><path d="M2.500.5h9v13h-9z" fill="#fff" stroke="#666"/><path d="M4 2h4v4H4z" fill="#3d9be6"/><path d="M9 2.500h1.500M9 4.500h1.500M4 7.500h6M4 11.500h4" stroke="#888"/><path d="M4 9.500h6" stroke="#3d9be6"/></svg>Свойства</button>
            <button role="menuitem"><i></i>Быстрые свойства</button>
            <!-- frame around the active item -->
            <div class="pointer-events-none absolute -left-1.5 -right-1.5 top-[146px] h-[30px] rounded-[9px] border-4 border-[#fa0000] shadow-[0_3px_4px_rgba(0,0,0,0.4),inset_0_3px_4px_rgba(0,0,0,0.4)]"></div>
        </div>
    </div>

    <script>
        const grips = document.getElementById('grips');
        const points = [
            [241, 262], [282, 234], [323, 207], [364, 206], [404, 205],
            [407, 262], [407, 301], [407, 340], [366, 340], [325, 340],
            [325, 301], [325, 262], [283, 262]
        ];

        points.forEach(([x, y]) => {
            const rect = document.createElementNS('http://www.w3.org/2000/svg', 'rect');
            rect.setAttribute('x', x - 4);
            rect.setAttribute('y', y - 4);
            rect.setAttribute('width', 8);
            rect.setAttribute('height', 8);
            grips.appendChild(rect);
        });
    </script>
</body>
</html>
